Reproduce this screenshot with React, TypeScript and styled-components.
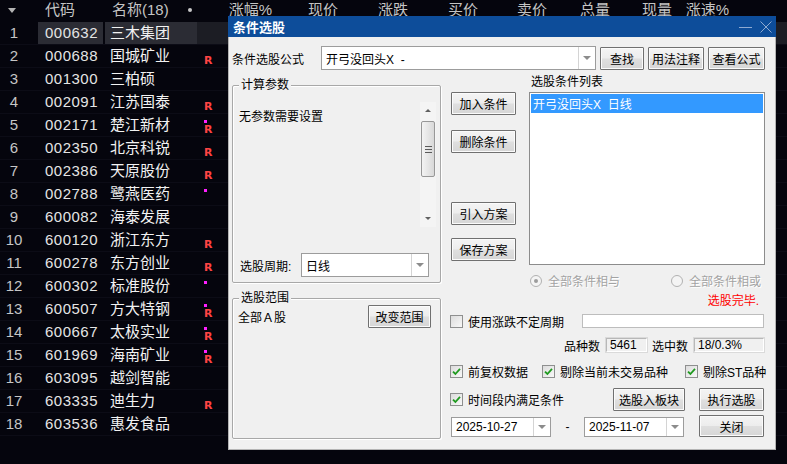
import * as React from 'react';
import styled, { createGlobalStyle } from 'styled-components';

const GlobalStyle = createGlobalStyle`
  html, body {
    margin: 0;
    padding: 0;
    background: #05050d;
  }
  body {
    overflow: hidden;
  }
  * {
    box-sizing: border-box;
  }
`;

const FONT = `"Liberation Sans", "Noto Sans CJK SC", sans-serif`;

const stocks = [
  { code: '000632', name: '三木集团', dot: false, r: false },
  { code: '000688', name: '国城矿业', dot: false, r: true },
  { code: '001300', name: '三柏硕', dot: false, r: false },
  { code: '002091', name: '江苏国泰', dot: false, r: true },
  { code: '002171', name: '楚江新材', dot: true, r: true },
  { code: '002350', name: '北京科锐', dot: false, r: true },
  { code: '002386', name: '天原股份', dot: false, r: true },
  { code: '002788', name: '鹭燕医药', dot: true, r: false },
  { code: '600082', name: '海泰发展', dot: false, r: false },
  { code: '600120', name: '浙江东方', dot: false, r: true },
  { code: '600278', name: '东方创业', dot: false, r: true },
  { code: '600302', name: '标准股份', dot: true, r: false },
  { code: '600507', name: '方大特钢', dot: true, r: true },
  { code: '600667', name: '太极实业', dot: true, r: true },
  { code: '601969', name: '海南矿业', dot: true, r: true },
  { code: '603095', name: '越剑智能', dot: false, r: false },
  { code: '603335', name: '迪生力', dot: false, r: true },
  { code: '603536', name: '惠发食品', dot: false, r: false },
];

const quoteHeads: [string, number][] = [
  ['涨幅%', 54],
  ['现价', 66],
  ['涨跌', 70],
  ['买价', 70],
  ['卖价', 69],
  ['总量', 63],
  ['现量', 62],
  ['涨速%', 57],
];

/* ---------- quote table behind the dialog ---------- */

const Screen = styled.div`
  position: relative;
  width: 787px;
  height: 464px;
  overflow: hidden;
  background: #05050d;
  font-family: ${FONT};
`;

const HeadRow = styled.div`
  display: flex;
  align-items: flex-start;
  height: 22px;
  padding-top: 1px;
  font-size: 15px;
  line-height: 18px;
  color: #c4c4c4;
  white-space: nowrap;
`;

const SortCell = styled.div`
  width: 38px;
  height: 18px;
  flex: none;
  display: flex;
  align-items: center;
  padding-left: 8px;
`;

const SortArrow = styled.span`
  width: 0;
  height: 0;
  border-left: 4px solid transparent;
  border-right: 4px solid transparent;
  border-top: 5px solid #b4b4b4;
`;

const HeadCell = styled.div<{ $w: number; $right?: boolean; $pad?: number }>`
  width: ${p => p.$w}px;
  height: 18px;
  flex: none;
  display: flex;
  align-items: center;
  justify-content: ${p => (p.$right ? 'flex-end' : 'space-between')};
  padding: 0 ${p => (p.$right ? 4 : 5)}px 0 ${p => p.$pad ?? 0}px;
`;

const HeadDot = styled.span`
  width: 4px;
  height: 4px;
  border-radius: 50%;
  background: #c8c8c8;
`;

const Row = styled.div`
  display: flex;
  height: 23px;
  font-size: 15px;
  border-bottom: 1px solid #0c0c16;
`;

const IndexCell = styled.div`
  width: 38px;
  flex: none;
  padding-right: 10px;
  text-align: center;
  line-height: 22px;
  color: #c6c6c6;
`;

const CodeCell = styled.div<{ $sel: boolean }>`
  width: 65px;
  margin-right: 2px;
  flex: none;
  padding-left: 7px;
  line-height: 22px;
  letter-spacing: 0.5px;
  color: #e4e4e4;
  background: ${p => (p.$sel ? '#2b2c34' : 'transparent')};
`;

const NameCell = styled.div<{ $sel: boolean }>`
  width: 92px;
  flex: none;
  padding-left: 5px;
  line-height: 22px;
  color: #f2f2f2;
  background: ${p => (p.$sel ? '#2b2c34' : 'transparent')};
`;

const MarkerCell = styled.div<{ $sel: boolean }>`
  flex: 1;
  display: flex;
  flex-direction: column;
  align-items: flex-start;
  padding: 6px 0 0 7px;
  background: ${p => (p.$sel ? '#1c1d24' : 'transparent')};
`;

const Dot = styled.span<{ $on: boolean }>`
  width: 3px;
  height: 3px;
  margin-bottom: 2px;
  background: #ff20ff;
  visibility: ${p => (p.$on ? 'visible' : 'hidden')};
`;

const RMark = styled.span<{ $on: boolean }>`
  font-family: "DejaVu Sans", sans-serif;
  font-weight: bold;
  font-size: 11px;
  line-height: 9px;
  color: #ff4444;
  visibility: ${p => (p.$on ? 'visible' : 'hidden')};
`;

/* ---------- dialog ---------- */

const Dialog = styled.div`
  position: absolute;
  left: 228px;
  top: 16px;
  width: 548px;
  height: 434px;
  display: flex;
  flex-direction: column;
  background: #f0f0f0;
  border: 1px solid #b4b4b4;
  border-top: none;
  font-family: ${FONT};
  font-size: 12px;
  color: #000;
`;

const TitleBar = styled.div`
  height: 21px;
  flex: none;
  display: flex;
  align-items: center;
  margin: 0 -1px;
  padding: 0 4px 0 5px;
  background: #0d4d9a;
  color: #fff;
  font-size: 13px;
  font-weight: bold;
`;

const TitleText = styled.span`
  flex: 1;
`;

const TitleControls = styled.div`
  display: flex;
  align-items: center;
  gap: 8px;
`;

const MinLine = styled.span`
  width: 13px;
  height: 1px;
  margin-top: 2px;
  background: #8eaad2;
`;

const Body = styled.div`
  flex: 1;
  display: flex;
  flex-direction: column;
  padding: 9px 10px 0 3px;
`;

const TopRow = styled.div`
  height: 24px;
  display: flex;
  align-items: center;
`;

const FormulaLabel = styled.span`
  width: 89px;
  flex: none;
`;

const Combo = styled.div<{ $w: number; $h: number }>`
  width: ${p => p.$w}px;
  height: ${p => p.$h}px;
  flex: none;
  display: flex;
  background: #fff;
  border: 1px solid #9c9c9c;
`;

const ComboText = styled.span`
  flex: 1;
  display: flex;
  align-items: center;
  padding-left: 4px;
  white-space: pre;
  overflow: hidden;
`;

const ComboArrow = styled.span`
  width: 17px;
  flex: none;
  display: flex;
  align-items: center;
  justify-content: center;
  border-left: 1px solid #d4d4d4;

  &::after {
    content: '';
    width: 0;
    height: 0;
    border-left: 4px solid transparent;
    border-right: 4px solid transparent;
    border-top: 4px solid #8c8c8c;
  }
`;

const Button = styled.button<{ $w: number; $h?: number; $ml?: number; $mt?: number }>`
  width: ${p => p.$w}px;
  height: ${p => p.$h ?? 23}px;
  margin-left: ${p => p.$ml ?? 0}px;
  margin-top: ${p => p.$mt ?? 0}px;
  flex: none;
  padding: 0;
  font-family: ${FONT};
  font-size: 12px;
  color: #000;
  border: 1px solid #707070;
  border-radius: 1px;
  background: linear-gradient(to bottom, #f4f4f4 0%, #ededed 48%, #dfdfdf 52%, #d6d6d6 100%);
  box-shadow: inset 0 0 0 1px #fbfbfb;
`;

const Main = styled.div`
  flex: 1;
  display: flex;
  gap: 10px;
`;

const LeftCol = styled.div`
  width: 209px;
  flex: none;
  display: flex;
  flex-direction: column;
  gap: 15px;
  padding-top: 15px;
`;

const GroupBox = styled.div<{ $h: number }>`
  position: relative;
  height: ${p => p.$h}px;
  display: flex;
  flex-direction: column;
  border: 1px solid #a8a8a8;
  border-radius: 2px;
  box-shadow: inset 1px 1px 0 #ffffff, 1px 1px 0 #ffffff;
`;

const GroupTitle = styled.span`
  position: absolute;
  top: -8px;
  left: 6px;
  padding: 0 2px;
  line-height: 14px;
  background: #f0f0f0;
`;

const ParamBox = styled(GroupBox)`
  padding: 16px 4px 5px 6px;
`;

const ParamArea = styled.div`
  height: 125px;
  display: flex;
`;

const ParamText = styled.div`
  flex: 1;
  padding-top: 8px;
  line-height: 14px;
`;

const ScrollTrack = styled.div`
  width: 16px;
  flex: none;
  display: flex;
  flex-direction: column;
  background: #f4f4f4;
`;

const ScrollArrow = styled.span<{ $down?: boolean }>`
  height: 17px;
  flex: none;
  display: flex;
  align-items: center;
  justify-content: center;

  &::after {
    content: '';
    width: 0;
    height: 0;
    border-left: 3px solid transparent;
    border-right: 3px solid transparent;
    ${p => (p.$down ? 'border-top: 3px solid #606060;' : 'border-bottom: 3px solid #606060;')}
  }
`;

const ScrollThumb = styled.span`
  height: 56px;
  margin: 2px 1px 0;
  display: flex;
  flex-direction: column;
  align-items: center;
  justify-content: center;
  gap: 2px;
  border: 1px solid #979797;
  border-radius: 2px;
  background: linear-gradient(to right, #f3f3f3, #e6e6e6 50%, #d8d8d8);
`;

const Grip = styled.span`
  width: 7px;
  height: 1px;
  background: #5a5a5a;
`;

const ScrollGap = styled.span`
  flex: 1;
`;

const Spacer = styled.div`
  flex: 1;
`;

const PeriodRow = styled.div`
  height: 24px;
  display: flex;
  align-items: center;
`;

const PeriodLabel = styled.span`
  width: 62px;
  flex: none;
  padding-left: 1px;
`;

const RangeBox = styled(GroupBox)`
  padding: 6px 9px 0 5px;
`;

const RangeRow = styled.div`
  display: flex;
  align-items: center;
  justify-content: space-between;
`;

const RightCol = styled.div`
  width: 314px;
  flex: none;
  display: flex;
  flex-direction: column;
`;

const UpperRow = styled.div`
  height: 217px;
  display: flex;
`;

const SideButtons = styled.div`
  width: 65px;
  flex: none;
  display: flex;
  flex-direction: column;
  padding-top: 22px;
`;

const ListCol = styled.div`
  width: 236px;
  margin-left: 13px;
  display: flex;
  flex-direction: column;
`;

const ListLabel = styled.div`
  height: 22px;
  padding: 5px 0 0 2px;
  line-height: 14px;
`;

const ListBox = styled.div`
  height: 173px;
  padding: 1px;
  background: #fff;
  border: 1px solid #8c8c8c;
`;

const ListItem = styled.div<{ $sel?: boolean }>`
  height: 19px;
  display: flex;
  align-items: center;
  padding-left: 2px;
  white-space: pre;
  background: ${p => (p.$sel ? '#3399ff' : 'transparent')};
  color: ${p => (p.$sel ? '#fff' : '#000')};
`;

const RadioRow = styled.div`
  height: 14px;
  margin-top: 7px;
  padding-left: 1px;
  display: grid;
  grid-template-columns: 141px 1fr;
`;

const RadioItem = styled.label`
  display: flex;
  align-items: center;
  color: #a3a3a3;
  text-shadow: 1px 1px 0 #ffffff;
`;

const RadioCircle = styled.span<{ $on?: boolean }>`
  width: 12px;
  height: 12px;
  margin-right: 6px;
  flex: none;
  display: flex;
  align-items: center;
  justify-content: center;
  border: 1px solid #b1b1b1;
  border-radius: 50%;
  background: #f4f4f4;

  &::after {
    content: '';
    width: 4px;
    height: 4px;
    border-radius: 50%;
    background: ${p => (p.$on ? '#9c9c9c' : 'transparent')};
  }
`;

const StatusRow = styled.div`
  height: 14px;
  margin-top: 7px;
  padding-right: 6px;
  text-align: right;
  line-height: 14px;
  color: #ff0000;
`;

const FlowRow = styled.div<{ $mt: number; $h: number; $end?: boolean }>`
  height: ${p => p.$h}px;
  margin-top: ${p => p.$mt}px;
  display: flex;
  align-items: ${p => (p.$end ? 'flex-end' : 'center')};
  justify-content: flex-start;
`;

const CheckItem = styled.label<{ $ml?: number }>`
  display: flex;
  align-items: center;
  margin-left: ${p => p.$ml ?? -1}px;
  white-space: nowrap;
`;

const CheckBox = styled.span`
  width: 13px;
  height: 13px;
  margin-right: 5px;
  flex: none;
  display: flex;
  align-items: center;
  justify-content: center;
  border: 1px solid #8e8f8f;
  background: linear-gradient(135deg, #dcdcdc, #f8f8f8);
`;

const InputBox = styled.div`
  width: 182px;
  height: 14px;
  margin: 0 1px 0 auto;
  background: #fff;
  border: 1px solid #bdbdbd;
`;

const CountRow = styled(FlowRow)`
  justify-content: flex-end;
  padding-right: 1px;
`;

const ValueBox = styled.span<{ $w: number }>`
  width: ${p => p.$w}px;
  height: 14px;
  margin: 0 5px 0 6px;
  display: flex;
  align-items: center;
  padding-left: 3px;
  border: 1px solid;
  border-color: #b8b8b8 #ffffff #ffffff #b8b8b8;
  box-shadow: 0 0 0 1px #dadada;
  &:last-child {
    margin-right: 0;
  }
`;

const Dash = styled.span`
  width: 33px;
  flex: none;
  text-align: center;
  line-height: 20px;
`;

const PushRight = styled.div`
  margin-left: auto;
  margin-right: 1px;
  display: flex;
`;

const Check = () => (
  <svg width="9" height="9" viewBox="0 0 9 9">
    <path d="M1 4.6 L3.4 7 L8 1.8" fill="none" stroke="#1f9a1f" strokeWidth="1.8" />
  </svg>
);

const CloseIcon = () => (
  <svg width="12" height="12" viewBox="0 0 12 12">
    <path d="M0.5 0.5 L11.5 11.5 M11.5 0.5 L0.5 11.5" stroke="#8eaad2" strokeWidth="1" />
  </svg>
);

const App = () => (
  <Screen>
    <GlobalStyle />
    <HeadRow>
      <SortCell>
        <SortArrow />
      </SortCell>
      <HeadCell $w={67} $pad={7}>代码</HeadCell>
      <HeadCell $w={92} $pad={7}>
        名称(18)
        <HeadDot />
      </HeadCell>
      <HeadCell $w={25} />
      {quoteHeads.map(([label, w]) => (
        <HeadCell key={label} $w={w} $right>
          {label}
        </HeadCell>
      ))}
    </HeadRow>
    {stocks.map((s, i) => (
      <Row key={s.code}>
        <IndexCell>{i + 1}</IndexCell>
        <CodeCell $sel={i === 0}>{s.code}</CodeCell>
        <NameCell $sel={i === 0}>{s.name}</NameCell>
        <MarkerCell $sel={i === 0}>
          <Dot $on={s.dot} />
          <RMark $on={s.r}>R</RMark>
        </MarkerCell>
      </Row>
    ))}

    <Dialog>
      <TitleBar>
        <TitleText>条件选股</TitleText>
        <TitleControls>
          <MinLine />
          <CloseIcon />
        </TitleControls>
      </TitleBar>
      <Body>
        <TopRow>
          <FormulaLabel>条件选股公式</FormulaLabel>
          <Combo $w={275} $h={24}>
            <ComboText>开弓没回头X  -</ComboText>
            <ComboArrow />
          </Combo>
          <Button $w={44} $ml={4}>查找</Button>
          <Button $w={56} $ml={4}>用法注释</Button>
          <Button $w={57} $ml={4}>查看公式</Button>
        </TopRow>

        <Main>
          <LeftCol>
            <ParamBox $h={198}>
              <GroupTitle>计算参数</GroupTitle>
              <ParamArea>
                <ParamText>无参数需要设置</ParamText>
                <ScrollTrack>
                  <ScrollArrow />
                  <ScrollThumb>
                    <Grip />
                    <Grip />
                    <Grip />
                  </ScrollThumb>
                  <ScrollGap />
                  <ScrollArrow $down />
                </ScrollTrack>
              </ParamArea>
              <Spacer />
              <PeriodRow>
                <PeriodLabel>选股周期:</PeriodLabel>
                <Combo $w={128} $h={24}>
                  <ComboText>日线</ComboText>
                  <ComboArrow />
                </Combo>
              </PeriodRow>
            </ParamBox>

            <RangeBox $h={141}>
              <GroupTitle>选股范围</GroupTitle>
              <RangeRow>
                <span>全部Ａ股</span>
                <Button $w={63}>改变范围</Button>
              </RangeRow>
            </RangeBox>
          </LeftCol>

          <RightCol>
            <UpperRow>
              <SideButtons>
                <Button $w={65}>加入条件</Button>
                <Button $w={65} $mt={15}>删除条件</Button>
                <Button $w={65} $mt={49}>引入方案</Button>
                <Button $w={65} $mt={13}>保存方案</Button>
              </SideButtons>
              <ListCol>
                <ListLabel>选股条件列表</ListLabel>
                <ListBox>
                  <ListItem $sel>开弓没回头X  日线</ListItem>
                </ListBox>
                <RadioRow>
                  <RadioItem>
                    <RadioCircle $on />
                    全部条件相与
                  </RadioItem>
                  <RadioItem>
                    <RadioCircle />
                    全部条件相或
                  </RadioItem>
                </RadioRow>
              </ListCol>
            </UpperRow>

            <StatusRow>选股完毕.</StatusRow>

            <FlowRow $mt={6} $h={14}>
              <CheckItem>
                <CheckBox />
                使用涨跌不定周期
              </CheckItem>
              <InputBox />
            </FlowRow>

            <CountRow $mt={10} $h={14}>
              品种数
              <ValueBox $w={41}>5461</ValueBox>
              选中数
              <ValueBox $w={70}>18/0.3%</ValueBox>
            </CountRow>

            <FlowRow $mt={12} $h={14}>
              <CheckItem>
                <CheckBox>
                  <Check />
                </CheckBox>
                前复权数据
              </CheckItem>
              <CheckItem $ml={14}>
                <CheckBox>
                  <Check />
                </CheckBox>
                剔除当前未交易品种
              </CheckItem>
              <CheckItem $ml={17}>
                <CheckBox>
                  <Check />
                </CheckBox>
                剔除ST品种
              </CheckItem>
            </FlowRow>

            <FlowRow $mt={10} $h={23}>
              <CheckItem>
                <CheckBox>
                  <Check />
                </CheckBox>
                时间段内满足条件
              </CheckItem>
              <PushRight>
                <Button $w={72}>选股入板块</Button>
                <Button $w={65} $ml={14}>执行选股</Button>
              </PushRight>
            </FlowRow>

            <FlowRow $mt={4} $h={22} $end>
              <Combo $w={100} $h={20}>
                <ComboText>2025-10-27</ComboText>
                <ComboArrow />
              </Combo>
              <Dash>-</Dash>
              <Combo $w={100} $h={20}>
                <ComboText>2025-11-07</ComboText>
                <ComboArrow />
              </Combo>
              <PushRight>
                <Button $w={65} $h={22}>关闭</Button>
              </PushRight>
            </FlowRow>
          </RightCol>
        </Main>
      </Body>
    </Dialog>
  </Screen>
);

export default App;
